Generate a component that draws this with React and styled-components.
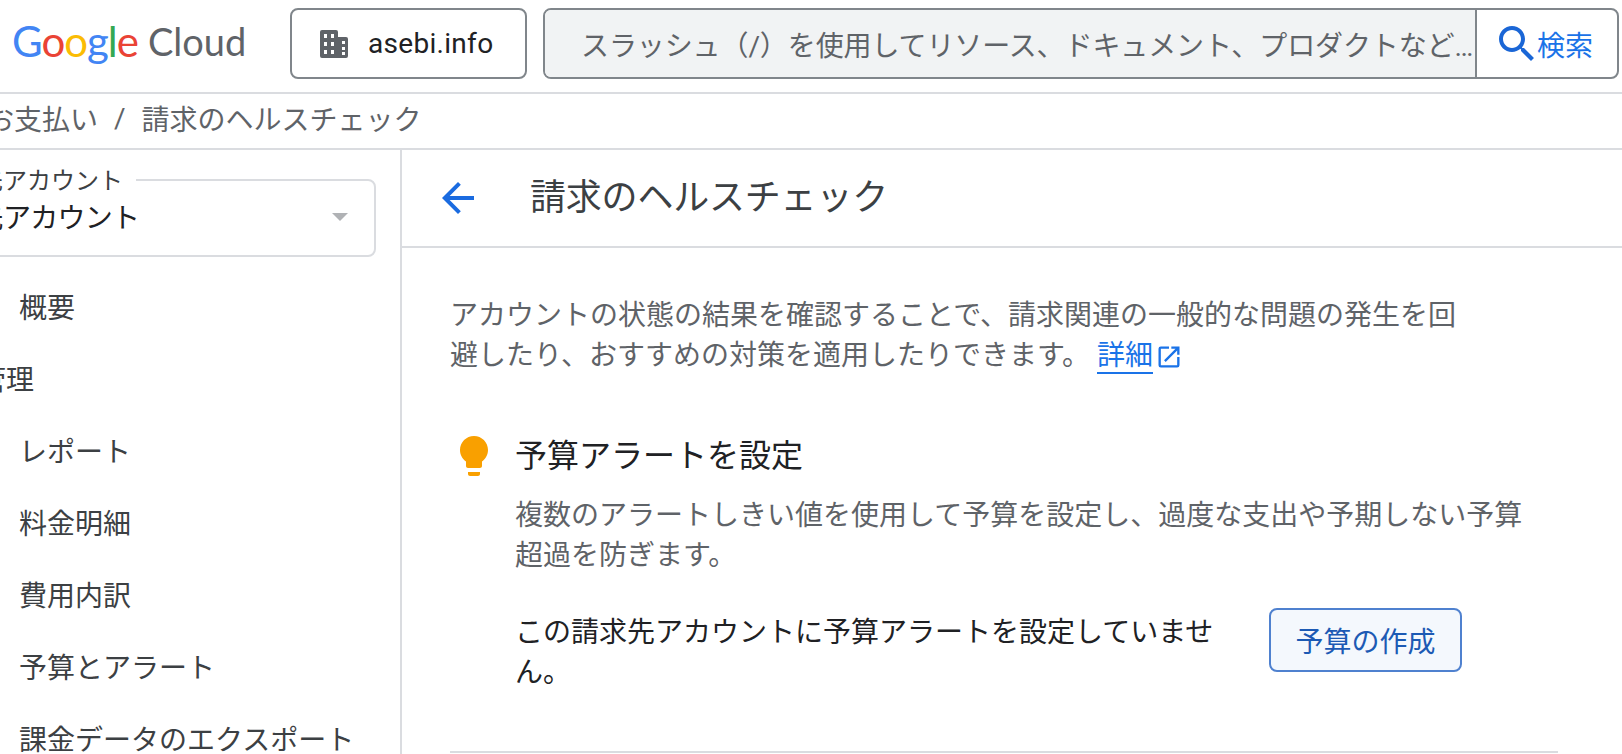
import React from "react";
import styled, { createGlobalStyle } from "styled-components";

const GlobalStyle = createGlobalStyle`
  html, body {
    margin: 0;
    padding: 0;
    background: #fff;
    overflow: hidden;
  }
  * {
    box-sizing: border-box;
  }
`;

const JP = `Roboto, "Noto Sans CJK JP", sans-serif`;

const Page = styled.div`
  width: 1622px;
  height: 754px;
  overflow: hidden;
  font-family: ${JP};
  font-size: 28px;
  font-weight: 300;
  color: #202124;
`;

const Header = styled.header`
  height: 94px;
  display: flex;
  align-items: flex-start;
  padding: 8px 3px 0 12px;
  border-bottom: 2px solid #dadce0;
`;

const Logo = styled.div`
  width: 278px;
  height: 71px;
  display: flex;
  align-items: center;
  font-family: Lato, Roboto, sans-serif;
  white-space: nowrap;
`;

const LogoWord = styled.span`
  font-size: 42px;
  font-weight: 400;
  letter-spacing: -1px;
  margin-top: -6px;
`;

const LogoLetter = styled.span`
  color: ${(p) => p.color};
`;

const LogoCloud = styled.span`
  font-size: 38px;
  font-weight: 400;
  color: #5f6368;
  margin-left: 10px;
  margin-top: -5px;
`;

const OrgButton = styled.div`
  width: 237px;
  height: 71px;
  border: 2px solid #80868b;
  border-radius: 8px;
  display: flex;
  align-items: center;
  padding-left: 28px;
  gap: 20px;
  flex-shrink: 0;
`;

const OrgName = styled.span`
  font-family: Roboto, sans-serif;
  font-size: 28px;
  font-weight: 400;
  letter-spacing: 0.3px;
  color: #202124;
`;

const SearchBox = styled.div`
  width: 1076px;
  height: 71px;
  margin-left: 16px;
  border: 2px solid #80868b;
  border-radius: 8px;
  display: flex;
  overflow: hidden;
  flex-shrink: 0;
`;

const SearchInput = styled.div`
  width: 930px;
  background: #f1f3f4;
  padding-left: 36px;
  display: flex;
  align-items: center;
  color: #5f6368;
  font-weight: 400;
  min-width: 0;
`;

const Placeholder = styled.span`
  white-space: nowrap;
  overflow: hidden;
  text-overflow: ellipsis;
  font-size: 28px;
  letter-spacing: -0.1px;
`;

const SearchButton = styled.div`
  flex: 1;
  border-left: 2px solid #80868b;
  display: flex;
  align-items: center;
  padding-left: 16px;
  color: #1a73e8;
  font-weight: 400;
`;

const SearchLabel = styled.span`
  margin-left: -4px;
`;

const Breadcrumbs = styled.nav`
  height: 56px;
  display: flex;
  align-items: center;
  margin-left: -14px;
  padding-bottom: 6px;
  border-bottom: 2px solid #dadce0;
  color: #5f6368;
  font-weight: 400;
  white-space: nowrap;
`;

const Slash = styled.span`
  margin: 0 16px 0 16px;
`;

const Body = styled.div`
  display: flex;
  height: 604px;
`;

const Sidebar = styled.aside`
  width: 402px;
  flex-shrink: 0;
  border-right: 2px solid #dadce0;
  padding-top: 29px;
  overflow: hidden;
`;

const Select = styled.div`
  position: relative;
  width: 480px;
  height: 78px;
  margin-left: -104px;
  border: 2px solid #dadce0;
  border-radius: 8px;
  display: flex;
  align-items: center;
  justify-content: space-between;
  padding: 0 26px 0 23px;
`;

const SelectLabel = styled.span`
  position: absolute;
  top: -14px;
  left: 33px;
  background: #fff;
  padding-right: 13px;
  font-size: 24px;
  line-height: 28px;
  font-weight: 400;
  color: #3c4043;
  white-space: nowrap;
`;

const SelectValue = styled.span`
  font-weight: 400;
  margin-top: -5px;
  letter-spacing: -0.7px;
  color: #202124;
  white-space: nowrap;
`;

const Caret = styled.span`
  width: 0;
  height: 0;
  margin-bottom: 3px;
  border-left: 8px solid transparent;
  border-right: 8px solid transparent;
  border-top: 8px solid #b0b2b5;
`;

const NavList = styled.div`
  display: flex;
  flex-direction: column;
  margin-top: 13px;
`;

const NavItem = styled.div`
  height: 72px;
  display: flex;
  align-items: center;
  white-space: nowrap;
  font-weight: 400;
  color: #3c4043;
  padding-left: ${(p) => (p.$group ? 0 : 19)}px;
  margin-left: ${(p) => (p.$group ? -22 : 0)}px;
`;

const Main = styled.main`
  flex: 1;
  min-width: 0;
`;

const TitleBar = styled.div`
  height: 98px;
  display: flex;
  align-items: center;
  padding-left: 32px;
  border-bottom: 2px solid #dadce0;
`;

const Title = styled.h1`
  margin: 0 0 0 48px;
  font-size: 36px;
  font-weight: 400;
  letter-spacing: -0.2px;
  color: #3c4043;
  line-height: 48px;
`;

const Content = styled.div`
  padding: 48px 64px 0 48px;
`;

const Intro = styled.p`
  margin: 0;
  width: 1010px;
  line-height: 40px;
  font-weight: 400;
  color: #5f6368;
`;

const DetailLink = styled.a`
  color: #1a73e8;
  border-bottom: 2px solid #1a73e8;
  margin-left: 7px;
  padding-bottom: 0;
`;

const ExternalIcon = styled.svg`
  width: 28px;
  height: 28px;
  margin-left: 2px;
  vertical-align: -6px;
  fill: #1a73e8;
`;

const Recommendation = styled.section`
  display: flex;
  margin-top: 60px;
  padding-bottom: 58px;
  border-bottom: 2px solid #dadce0;
`;

const BulbCol = styled.div`
  width: 65px;
  flex-shrink: 0;
  margin-top: -4px;
`;

const RecBody = styled.div`
  flex: 1;
  width: 1010px;
`;

const RecTitle = styled.h2`
  margin: 0;
  font-size: 32px;
  font-weight: 400;
  line-height: 40px;
  color: #202124;
`;

const RecText = styled.p`
  margin: 20px 0 0;
  width: 1010px;
  line-height: 40px;
  font-weight: 400;
  color: #5f6368;
`;

const ActionRow = styled.div`
  display: flex;
  align-items: flex-start;
  margin-top: 31px;
`;

const ActionText = styled.p`
  margin: 6px 28px 0 0;
  width: 726px;
  line-height: 40px;
  font-weight: 400;
  color: #202124;
`;

const CreateButton = styled.button`
  width: 193px;
  height: 64px;
  margin-top: 1px;
  background: #f4f8fd;
  border: 2px solid #4f81cf;
  border-radius: 8px;
  color: #1c5ab4;
  font-family: ${JP};
  font-size: 28px;
  font-weight: 400;
  padding: 0;
`;

const navItems = [
  { label: "概要" },
  { label: "管理", group: true },
  { label: "レポート" },
  { label: "料金明細" },
  { label: "費用内訳" },
  { label: "予算とアラート" },
  { label: "課金データのエクスポート" },
];

const logoLetters = [
  ["G", "#4285f4"],
  ["o", "#ea4335"],
  ["o", "#fbbc04"],
  ["g", "#4285f4"],
  ["l", "#34a853"],
  ["e", "#ea4335"],
];

const BuildingIcon = () => (
  <svg width="28" height="28" viewBox="0 0 28 28" fill="#5f6368">
    <path
      fillRule="evenodd"
      d="M2 0h14a2 2 0 0 1 2 2v5h8a2 2 0 0 1 2 2v17a2 2 0 0 1-2 2H2a2 2 0 0 1-2-2V2a2 2 0 0 1 2-2zM4 4v4h3V4H4zm7 0v4h3V4h-3zM4 12v4h3v-4H4zm7 0v4h3v-4h-3zM4 20v4h3v-4H4zm7 0v4h3v-4h-3zm11-9v3h3v-3h-3zm0 6v3h3v-3h-3zm0 5v3h3v-3h-3z"
    />
  </svg>
);

const SearchIcon = () => (
  <svg width="48" height="48" viewBox="0 0 24 24" fill="#1a66d6">
    <path d="M15.5 14h-.79l-.28-.27C15.41 12.59 16 11.11 16 9.5 16 5.91 13.09 3 9.5 3S3 5.91 3 9.5 5.91 16 9.5 16c1.61 0 3.09-.59 4.23-1.57l.27.28v.79l5 4.99L20.49 19l-4.99-5zm-6 0C7.01 14 5 11.99 5 9.5S7.01 5 9.5 5 14 7.01 14 9.5 11.99 14 9.5 14z" />
  </svg>
);

const BackIcon = () => (
  <svg width="48" height="48" viewBox="0 0 24 24" fill="#1a6be0">
    <path d="M20 11H7.83l5.59-5.59L12 4l-8 8 8 8 1.41-1.41L7.83 13H20v-2z" />
  </svg>
);

const BulbIcon = () => (
  <svg width="48" height="48" viewBox="0 0 24 24" fill="#f9a000">
    <path d="M9 21c0 .55.45 1 1 1h4c.55 0 1-.45 1-1v-1H9v1zm3-19C8.14 2 5 5.14 5 9c0 2.38 1.19 4.47 3 5.74V17c0 .55.45 1 1 1h6c.55 0 1-.45 1-1v-2.26c1.81-1.27 3-3.36 3-5.74 0-3.86-3.14-7-7-7z" />
  </svg>
);

const App = () => {
  return (
    <Page>
      <GlobalStyle />
      <Header>
        <Logo>
          <LogoWord>
            {logoLetters.map(([ch, color], i) => (
              <LogoLetter key={i} color={color}>
                {ch}
              </LogoLetter>
            ))}
          </LogoWord>
          <LogoCloud>Cloud</LogoCloud>
        </Logo>
        <OrgButton>
          <BuildingIcon />
          <OrgName>asebi.info</OrgName>
        </OrgButton>
        <SearchBox>
          <SearchInput>
            <Placeholder>
              スラッシュ（/）を使用してリソース、ドキュメント、プロダクトなどを検索
            </Placeholder>
          </SearchInput>
          <SearchButton>
            <SearchIcon />
            <SearchLabel>検索</SearchLabel>
          </SearchButton>
        </SearchBox>
      </Header>
      <Breadcrumbs>
        お支払い
        <Slash>/</Slash>
        請求のヘルスチェック
      </Breadcrumbs>
      <Body>
        <Sidebar>
          <Select>
            <SelectLabel>請求先アカウント</SelectLabel>
            <SelectValue>請求先アカウント</SelectValue>
            <Caret />
          </Select>
          <NavList>
            {navItems.map((item) => (
              <NavItem key={item.label} $group={item.group}>
                {item.label}
              </NavItem>
            ))}
          </NavList>
        </Sidebar>
        <Main>
          <TitleBar>
            <BackIcon />
            <Title>請求のヘルスチェック</Title>
          </TitleBar>
          <Content>
            <Intro>
              アカウントの状態の結果を確認することで、請求関連の一般的な問題の発生を回避したり、おすすめの対策を適用したりできます。
              <DetailLink>詳細</DetailLink>
              <ExternalIcon viewBox="0 0 24 24">
                <path d="M19 19H5V5h7V3H5a2 2 0 0 0-2 2v14a2 2 0 0 0 2 2h14a2 2 0 0 0 2-2v-7h-2v7zM14 3v2h3.59l-9.83 9.83 1.41 1.41L19 6.41V10h2V3h-7z" />
              </ExternalIcon>
            </Intro>
            <Recommendation>
              <BulbCol>
                <BulbIcon />
              </BulbCol>
              <RecBody>
                <RecTitle>予算アラートを設定</RecTitle>
                <RecText>
                  複数のアラートしきい値を使用して予算を設定し、過度な支出や予期しない予算超過を防ぎます。
                </RecText>
                <ActionRow>
                  <ActionText>
                    この請求先アカウントに予算アラートを設定していません。
                  </ActionText>
                  <CreateButton>予算の作成</CreateButton>
                </ActionRow>
              </RecBody>
            </Recommendation>
          </Content>
        </Main>
      </Body>
    </Page>
  );
};

export default App;
